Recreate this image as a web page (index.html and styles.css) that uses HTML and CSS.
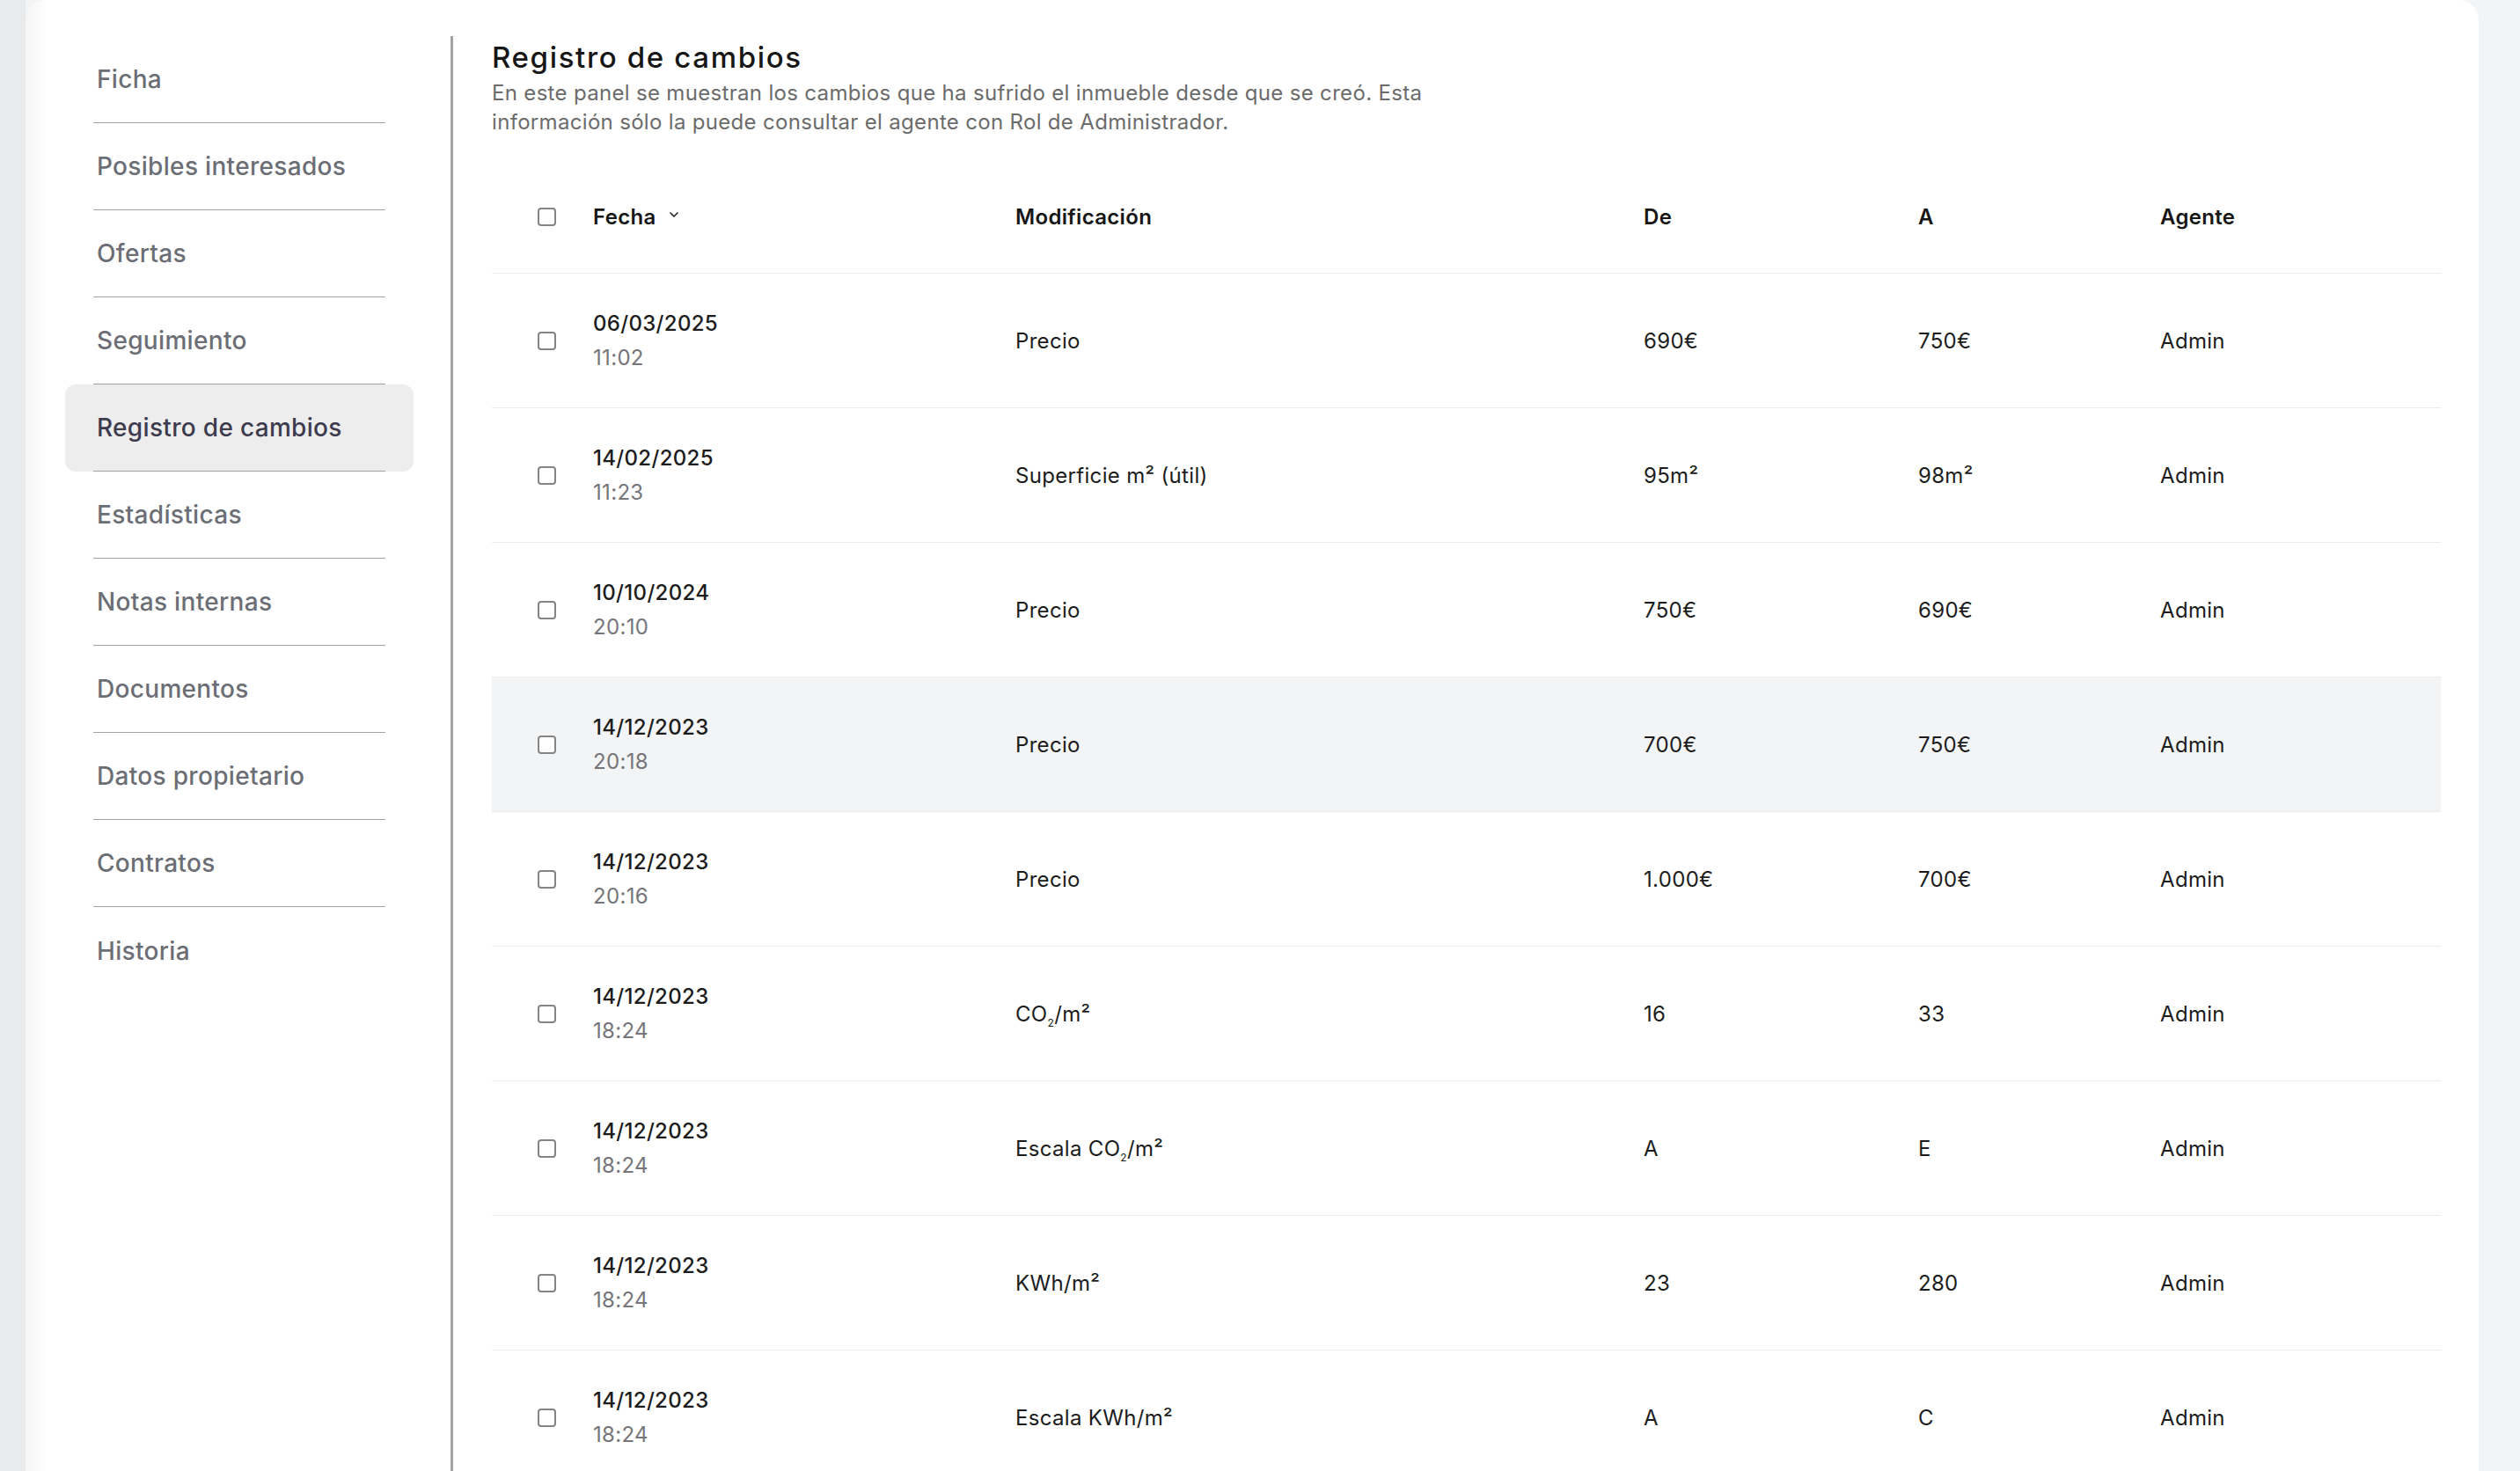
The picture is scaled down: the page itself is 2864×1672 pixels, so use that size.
FILE: index.html
```html
<!DOCTYPE html>
<html>

<head>
    <title>Registro de cambios</title>
    <link rel="stylesheet" href="styles.css">
</head>

<body>
    <div class="app">
        <div class="rail"></div>
        <div class="card">
            <nav class="side">
                <ul class="side-list">
                    <li class="side-item"><a class="side-link">Ficha</a></li>
                    <li class="side-item"><a class="side-link">Posibles interesados</a></li>
                    <li class="side-item"><a class="side-link">Ofertas</a></li>
                    <li class="side-item"><a class="side-link">Seguimiento</a></li>
                    <li class="side-item active"><a class="side-link">Registro de cambios</a></li>
                    <li class="side-item"><a class="side-link">Estadísticas</a></li>
                    <li class="side-item"><a class="side-link">Notas internas</a></li>
                    <li class="side-item"><a class="side-link">Documentos</a></li>
                    <li class="side-item"><a class="side-link">Datos propietario</a></li>
                    <li class="side-item"><a class="side-link">Contratos</a></li>
                    <li class="side-item"><a class="side-link">Historia</a></li>
                </ul>
            </nav>

            <main class="panel">
                <h1 class="panel-title">Registro de cambios</h1>
                <p class="panel-desc">En este panel se muestran los cambios que ha sufrido el inmueble desde que se creó. Esta información sólo la puede consultar el agente con Rol de Administrador.</p>

                <table class="changes">
                    <colgroup>
                        <col class="col-check">
                        <col class="col-date">
                        <col class="col-mod">
                        <col class="col-from">
                        <col class="col-to">
                        <col class="col-agent">
                    </colgroup>
                    <thead>
                        <tr>
                            <th class="check-cell"><input type="checkbox" class="check"></th>
                            <th>Fecha<svg class="sort" width="10" height="6" viewBox="0 0 10 6"><polyline points="1,1 5,5 9,1" fill="none" stroke="#222" stroke-width="1.6" stroke-linecap="round" stroke-linejoin="round"/></svg></th>
                            <th>Modificación</th>
                            <th>De</th>
                            <th>A</th>
                            <th>Agente</th>
                        </tr>
                    </thead>
                    <tbody>
                        <tr>
                            <td class="check-cell"><input type="checkbox" class="check"></td>
                            <td><div class="date">06/03/2025</div><div class="time">11:02</div></td>
                            <td>Precio</td>
                            <td>690€</td>
                            <td>750€</td>
                            <td>Admin</td>
                        </tr>
                        <tr>
                            <td class="check-cell"><input type="checkbox" class="check"></td>
                            <td><div class="date">14/02/2025</div><div class="time">11:23</div></td>
                            <td>Superficie m² (útil)</td>
                            <td>95m²</td>
                            <td>98m²</td>
                            <td>Admin</td>
                        </tr>
                        <tr>
                            <td class="check-cell"><input type="checkbox" class="check"></td>
                            <td><div class="date">10/10/2024</div><div class="time">20:10</div></td>
                            <td>Precio</td>
                            <td>750€</td>
                            <td>690€</td>
                            <td>Admin</td>
                        </tr>
                        <tr class="hover">
                            <td class="check-cell"><input type="checkbox" class="check"></td>
                            <td><div class="date">14/12/2023</div><div class="time">20:18</div></td>
                            <td>Precio</td>
                            <td>700€</td>
                            <td>750€</td>
                            <td>Admin</td>
                        </tr>
                        <tr>
                            <td class="check-cell"><input type="checkbox" class="check"></td>
                            <td><div class="date">14/12/2023</div><div class="time">20:16</div></td>
                            <td>Precio</td>
                            <td>1.000€</td>
                            <td>700€</td>
                            <td>Admin</td>
                        </tr>
                        <tr>
                            <td class="check-cell"><input type="checkbox" class="check"></td>
                            <td><div class="date">14/12/2023</div><div class="time">18:24</div></td>
                            <td>CO<sub>2</sub>/m²</td>
                            <td>16</td>
                            <td>33</td>
                            <td>Admin</td>
                        </tr>
                        <tr>
                            <td class="check-cell"><input type="checkbox" class="check"></td>
                            <td><div class="date">14/12/2023</div><div class="time">18:24</div></td>
                            <td>Escala CO<sub>2</sub>/m²</td>
                            <td>A</td>
                            <td>E</td>
                            <td>Admin</td>
                        </tr>
                        <tr>
                            <td class="check-cell"><input type="checkbox" class="check"></td>
                            <td><div class="date">14/12/2023</div><div class="time">18:24</div></td>
                            <td>KWh/m²</td>
                            <td>23</td>
                            <td>280</td>
                            <td>Admin</td>
                        </tr>
                        <tr>
                            <td class="check-cell"><input type="checkbox" class="check"></td>
                            <td><div class="date">14/12/2023</div><div class="time">18:24</div></td>
                            <td>Escala KWh/m²</td>
                            <td>A</td>
                            <td>C</td>
                            <td>Admin</td>
                        </tr>
                    </tbody>
                </table>
            </main>
        </div>
    </div>
</body>

</html>
```

FILE: styles.css
```css
html, body {
    margin: 0;
    height: 100%;
    overflow: hidden;
}

body {
    background-color: #f3f4f6;
    font-family: Inter, "Noto Sans", sans-serif;
    letter-spacing: 0.02em;
}

.app {
    display: flex;
    height: 100vh;
}

.rail {
    width: 29px;
    flex: none;
    background-color: #e9eaec;
}

.card {
    flex: 1;
    display: flex;
    margin-right: 47px;
    padding: 41px 43px 0 45px;
    background: linear-gradient(to right, #f5f5f6, #ffffff 26px);
    border-radius: 22px 22px 0 0;
    overflow: hidden;
}

/* side menu */
.side {
    width: 396px;
    flex: none;
    margin-right: 42px;
}

.side-list {
    list-style: none;
    margin: 0;
    padding: 0;
}

.side-item {
    height: 99px;
    padding: 0 32px;
    box-sizing: border-box;
    border-radius: 12px;
}

.side-item.active {
    background-color: #ededed;
}

.side-link {
    display: flex;
    align-items: center;
    height: 100%;
    box-sizing: border-box;
    padding-left: 4px;
    border-bottom: 1px solid #a3a3a3;
    font-size: 28px;
    font-weight: 500;
    color: #6c6e75;
    text-decoration: none;
    cursor: pointer;
}

.side-item.active .side-link {
    color: #3d3b4e;
}

.side-item:last-child .side-link {
    border-bottom: none;
}

/* content */
.panel {
    flex: 1;
    border-left: 3px solid #a3a3a3;
    padding-left: 44px;
}

.panel-title {
    margin: 4px 0 0;
    font-size: 33px;
    line-height: 40px;
    font-weight: 500;
    letter-spacing: 0.05em;
    color: #161616;
}

.panel-desc {
    max-width: 1080px;
    margin: 4px 0 0;
    font-size: 24px;
    line-height: 33px;
    color: #6b6b6b;
}

table.changes {
    width: 100%;
    margin-top: 28px;
    border-collapse: collapse;
    table-layout: fixed;
}

.col-check { width: 115px; }
.col-date { width: 480px; }
.col-mod { width: 714px; }
.col-from { width: 312px; }
.col-to { width: 275px; }
.col-agent { width: 319px; }

.changes th, .changes td {
    padding: 0;
    text-align: left;
    vertical-align: middle;
    font-size: 24px;
    border-bottom: 1px solid #ececec;
}

.changes th {
    height: 127px;
    font-weight: 600;
    color: #161616;
}

.changes td {
    height: 152px;
    font-weight: 400;
    color: #1c1c1c;
}

.changes tr.hover td {
    background-color: #f3f4f6;
}

.check-cell {
    padding-left: 52px !important;
}

.check {
    appearance: none;
    display: block;
    width: 21px;
    height: 21px;
    margin: 0;
    border: 2px solid #858585;
    border-radius: 4px;
    background: #fff;
}

.sort {
    margin-left: 15px;
    vertical-align: 8px;
}

.date {
    line-height: 39px;
    font-weight: 500;
    color: #1c1c1c;
}

.time {
    line-height: 39px;
    color: #75757a;
}

sub {
    font-size: 12px;
    vertical-align: -6px;
    line-height: 0;
}
```
